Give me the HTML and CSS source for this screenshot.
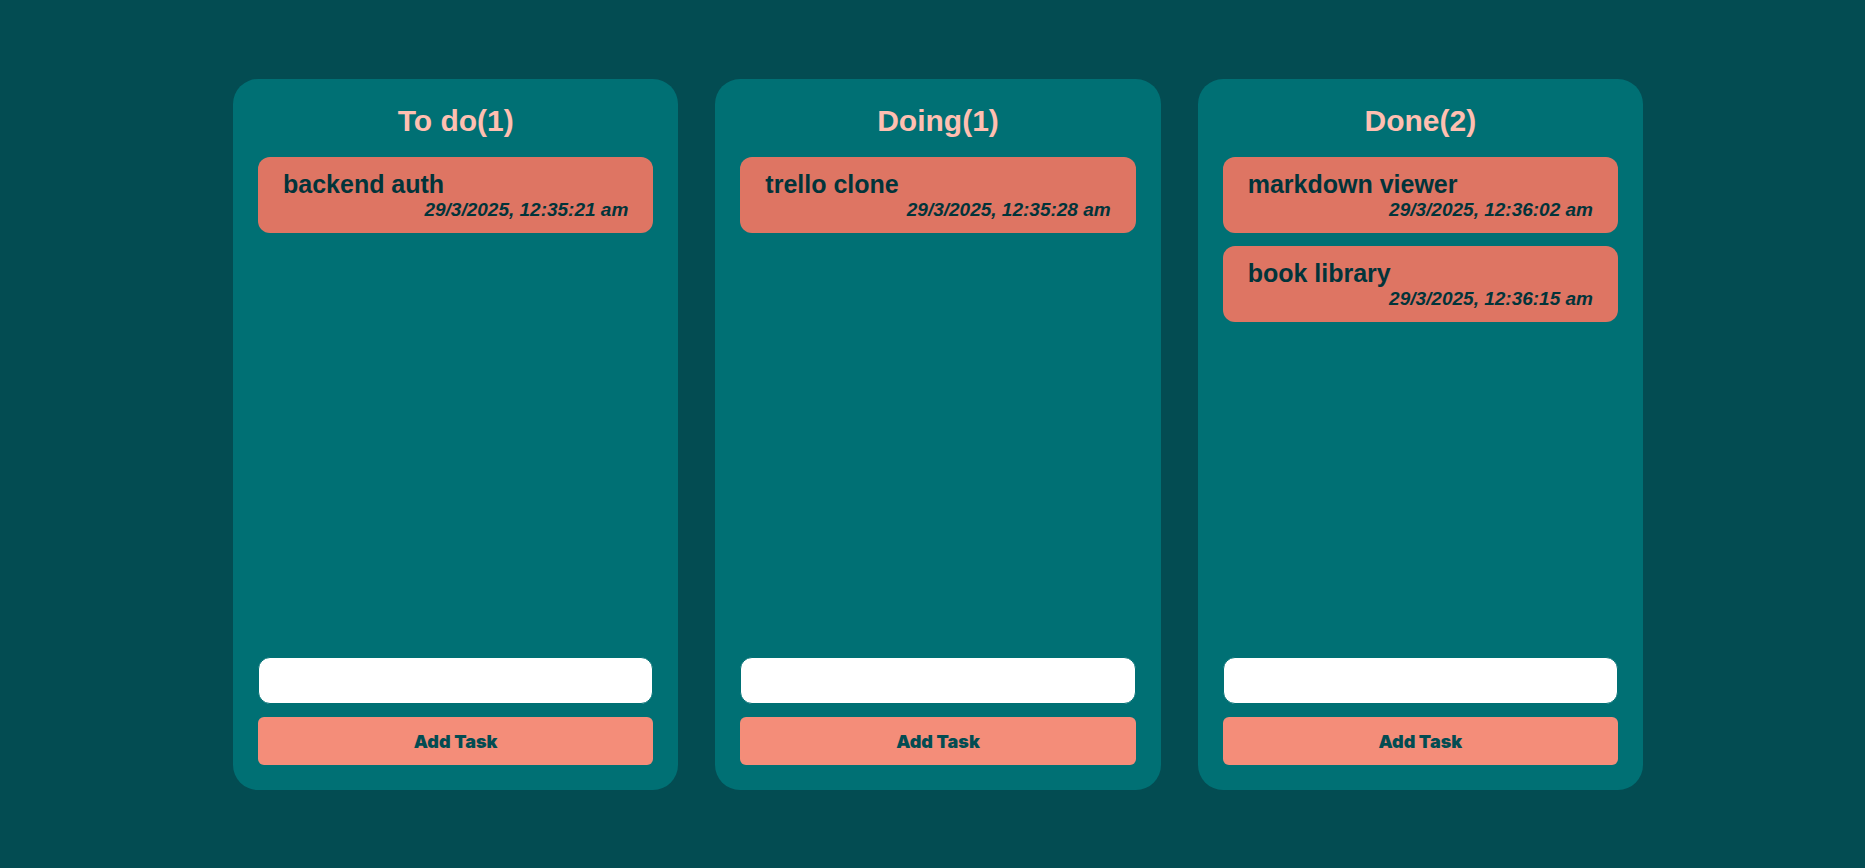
FILE: index.html
```html
<!DOCTYPE html>
<html lang="en">
<head>
<meta charset="utf-8">
<meta name="viewport" content="width=device-width, initial-scale=1">
<title>Task board</title>
<link rel="stylesheet" href="styles.css">
</head>
<body>
<main class="board">
  <section class="column">
    <h2 class="column-title">To do(1)</h2>
    <ul class="tasks">
      <li class="task"><h3 class="task-name">backend auth</h3><time class="task-time">29/3/2025, 12:35:21 am</time></li>
    </ul>
    <form class="add-form">
      <input class="task-input" type="text" aria-label="New task for To do">
      <button class="add-button" type="button">Add Task</button>
    </form>
  </section>
  <section class="column">
    <h2 class="column-title">Doing(1)</h2>
    <ul class="tasks">
      <li class="task"><h3 class="task-name">trello clone</h3><time class="task-time">29/3/2025, 12:35:28 am</time></li>
    </ul>
    <form class="add-form">
      <input class="task-input" type="text" aria-label="New task for Doing">
      <button class="add-button" type="button">Add Task</button>
    </form>
  </section>
  <section class="column">
    <h2 class="column-title">Done(2)</h2>
    <ul class="tasks">
      <li class="task"><h3 class="task-name">markdown viewer</h3><time class="task-time">29/3/2025, 12:36:02 am</time></li>
      <li class="task"><h3 class="task-name">book library</h3><time class="task-time">29/3/2025, 12:36:15 am</time></li>
    </ul>
    <form class="add-form">
      <input class="task-input" type="text" aria-label="New task for Done">
      <button class="add-button" type="button">Add Task</button>
    </form>
  </section>
</main>
</body>
</html>
```

FILE: styles.css
```css
* {
  box-sizing: border-box;
  margin: 0;
  padding: 0;
}

body {
  background: #034c52;
  font-family: "Liberation Sans", Arial, sans-serif;
}

.board {
  display: grid;
  grid-template-columns: repeat(3, 1fr);
  gap: 37px;
  min-height: 100vh;
  padding: 79px 222px 78px 233px;
}

.column {
  display: flex;
  flex-direction: column;
  gap: 19px;
  padding: 25px;
  border-radius: 25px;
  background: #007074;
}

.column-title {
  color: #ffbfb1;
  font-size: 30px;
  line-height: 34px;
  text-align: center;
}

.tasks {
  display: flex;
  flex: 1;
  flex-direction: column;
  gap: 13px;
  list-style: none;
}

.task {
  display: flex;
  flex-direction: column;
  padding: 13px 25px 12px;
  border-radius: 12px;
  background: #de7563;
  color: #02343a;
}

.task-name {
  font-size: 25px;
  line-height: 28px;
}

.task-time {
  align-self: flex-end;
  font-size: 19px;
  font-style: italic;
  font-weight: 700;
  line-height: 23px;
}

.add-form {
  display: flex;
  flex-direction: column;
  gap: 13px;
}

.task-input {
  width: 100%;
  height: 47px;
  padding: 0 12px;
  border: 1px solid #007074;
  border-radius: 12px;
  background: #fff;
  color: #02343a;
  font: 16px "Liberation Sans", Arial, sans-serif;
}

.add-button {
  height: 48px;
  border: 0;
  border-radius: 6px;
  background: #f48d79;
  color: #034c52;
  font: 900 18px "Arial Black", Inter, sans-serif;
  cursor: pointer;
}
```
